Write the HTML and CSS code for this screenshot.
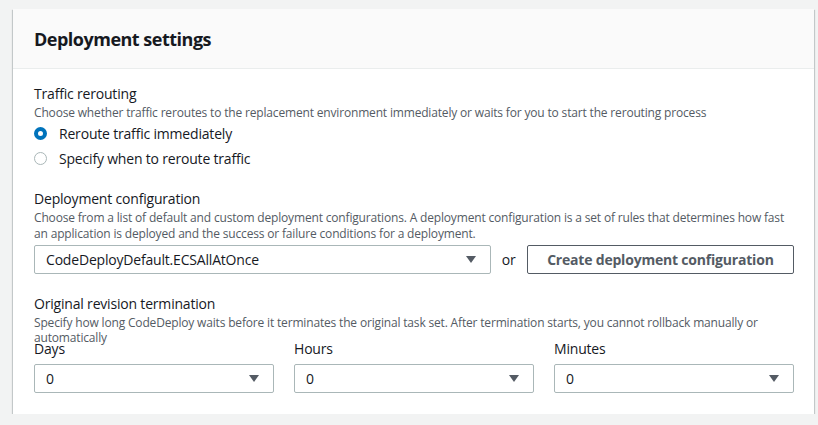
FILE: index.html
```html
<!DOCTYPE html>
<html>
<head>
<meta charset="utf-8">
<link rel="stylesheet" href="styles.css">
</head>
<body>
<div class="card">
  <div class="card-header"><h2 class="title">Deployment settings</h2></div>
  <div class="card-body">
    <div class="field">
      <div class="label">Traffic rerouting</div>
      <div class="desc">Choose whether traffic reroutes to the replacement environment immediately or waits for you to start the rerouting process</div>
      <div class="radios">
        <div class="radio-row"><span class="radio checked"></span><span>Reroute traffic immediately</span></div>
        <div class="radio-row"><span class="radio"></span><span>Specify when to reroute traffic</span></div>
      </div>
    </div>
    <div class="field mid">
      <div class="label">Deployment configuration</div>
      <div class="desc">Choose from a list of default and custom deployment configurations. A deployment configuration is a set of rules that determines how fast an application is deployed and the success or failure conditions for a deployment.</div>
      <div class="config-row">
        <div class="select wide"><span>CodeDeployDefault.ECSAllAtOnce</span><span class="caret"></span></div>
        <span class="or">or</span>
        <div class="button">Create deployment configuration</div>
      </div>
    </div>
    <div class="field last">
      <div class="label">Original revision termination</div>
      <div class="desc tight">Specify how long CodeDeploy waits before it terminates the original task set. After termination starts, you cannot rollback manually or automatically</div>
      <div class="grid3">
        <div>
          <div class="label">Days</div>
          <div class="select"><span>0</span><span class="caret"></span></div>
        </div>
        <div>
          <div class="label">Hours</div>
          <div class="select"><span>0</span><span class="caret"></span></div>
        </div>
        <div>
          <div class="label">Minutes</div>
          <div class="select"><span>0</span><span class="caret"></span></div>
        </div>
      </div>
    </div>
  </div>
</div>
</body>
</html>
```

FILE: styles.css
```css
html, body {
  margin: 0;
  padding: 0;
  background: #f2f3f3;
  font-family: "Open Sans", "Noto Sans", sans-serif;
  color: #16191f;
}
body {
  padding: 9px 4px 0 13px;
}
.card {
  background: #fff;
  width: 801px;
  box-shadow: 0 1px 1px 0 rgba(0, 28, 36, 0.3), 1px 1px 1px 0 rgba(0, 28, 36, 0.15), -1px 1px 1px 0 rgba(0, 28, 36, 0.15);
}
.card-header {
  background: #fafafa;
  border-bottom: 1px solid #eaeded;
  height: 59px;
  padding: 0 21px;
  display: flex;
  align-items: center;
}
.title {
  margin: 0;
  font-size: 18px;
  font-weight: 700;
  line-height: 22px;
  letter-spacing: -0.5px;
}
.card-body {
  padding: 14px 20px 21px 21px;
}
.field {
  margin-bottom: 17px;
}
.field.mid {
  margin-bottom: 19px;
}
.field.last {
  margin-bottom: 0;
}
.label {
  font-size: 14px;
  line-height: 22px;
  letter-spacing: -0.19px;
}
.desc {
  font-size: 12px;
  line-height: 16px;
  color: #545b64;
  letter-spacing: -0.17px;
}
.desc.tight {
  line-height: 15px;
  margin-bottom: -7px;
}
.radio-row {
  display: flex;
  align-items: center;
  gap: 12px;
  font-size: 14px;
  line-height: 25px;
  letter-spacing: -0.19px;
}
.radio {
  width: 13px;
  height: 13px;
  border-radius: 50%;
  border: 1px solid #aab7b8;
  box-sizing: border-box;
  flex: none;
}
.radio.checked {
  border: 4px solid #0073bb;
  background: #fff;
}
.config-row {
  display: flex;
  align-items: center;
  margin-top: 3px;
}
.select {
  box-sizing: border-box;
  height: 29px;
  border: 1px solid #aab7b8;
  border-radius: 2px;
  display: flex;
  align-items: center;
  justify-content: space-between;
  padding: 0 14px 0 11px;
  font-size: 14px;
  letter-spacing: -0.19px;
  background: #fff;
}
.select.wide {
  width: 458px;
}
.caret {
  width: 0;
  height: 0;
  border-left: 5.5px solid transparent;
  border-right: 5.5px solid transparent;
  border-top: 7px solid #545b64;
}
.or {
  font-size: 14px;
  margin: 0 11px;
}
.button {
  box-sizing: border-box;
  width: 268px;
  height: 29px;
  border: 1px solid #545b64;
  border-radius: 2px;
  display: flex;
  align-items: center;
  justify-content: center;
  font-size: 14px;
  font-weight: 700;
  letter-spacing: -0.2px;
  color: #545b64;
}
.grid3 {
  display: grid;
  grid-template-columns: 240px 240px 240px;
  column-gap: 20px;
}
.grid3 .label {
  margin-bottom: 4px;
}
```
